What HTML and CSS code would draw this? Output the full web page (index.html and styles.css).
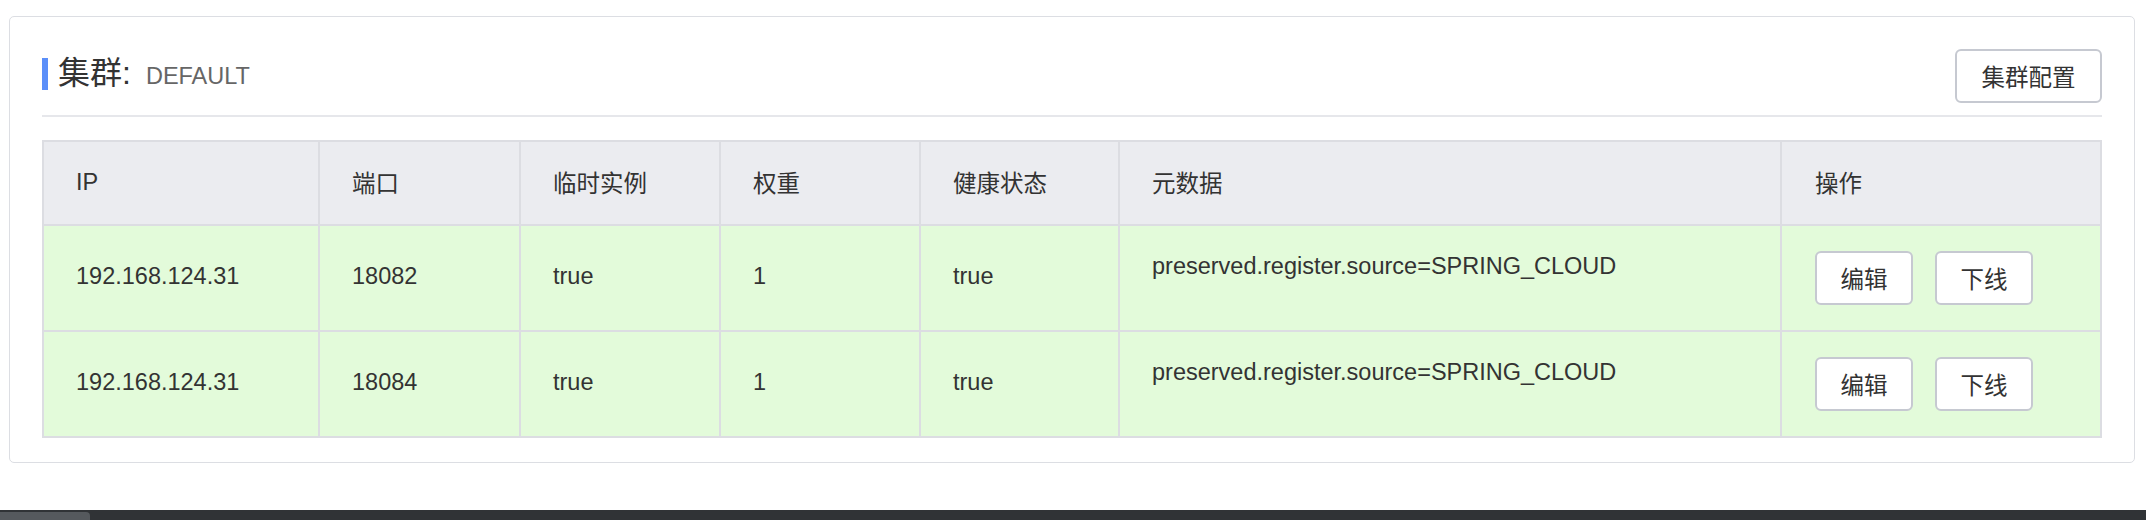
FILE: index.html
```html
<!DOCTYPE html>
<html lang="zh-CN">
<head>
<meta charset="utf-8">
<title>集群</title>
<link rel="stylesheet" href="styles.css">
</head>
<body>
<div class="page">
  <section class="card">
    <div class="card-head">
      <h2 class="title">
        <span class="title-mark"></span>
        <span class="title-text">集群:<span class="title-name">DEFAULT</span></span>
      </h2>
      <button class="btn btn-lg" type="button">集群配置</button>
    </div>
    <table class="grid">
      <colgroup>
        <col class="c-ip"><col class="c-port"><col class="c-eph"><col class="c-weight"><col class="c-health"><col class="c-meta"><col class="c-ops">
      </colgroup>
      <thead>
        <tr class="head-row">
          <th>IP</th><th>端口</th><th>临时实例</th><th>权重</th><th>健康状态</th><th>元数据</th><th class="ops">操作</th>
        </tr>
      </thead>
      <tbody>
        <tr class="body-row">
          <td>192.168.124.31</td><td>18082</td><td>true</td><td>1</td><td>true</td>
          <td class="meta">preserved.register.source=SPRING_CLOUD</td>
          <td class="ops"><div class="ops-group"><button class="btn btn-sm" type="button">编辑</button><button class="btn btn-sm" type="button">下线</button></div></td>
        </tr>
        <tr class="body-row">
          <td>192.168.124.31</td><td>18084</td><td>true</td><td>1</td><td>true</td>
          <td class="meta">preserved.register.source=SPRING_CLOUD</td>
          <td class="ops"><div class="ops-group"><button class="btn btn-sm" type="button">编辑</button><button class="btn btn-sm" type="button">下线</button></div></td>
        </tr>
      </tbody>
    </table>
  </section>
</div>
<div class="statusbar"><span class="statusbar-tab"></span></div>
</body>
</html>
```
FILE: styles.css
```css
html, body {
  margin: 0;
  padding: 0;
  background: #ffffff;
}
body {
  font-family: "Liberation Sans", "Noto Sans CJK SC", sans-serif;
  font-size: 23.5px;
  color: #333333;
  width: 2146px;
  height: 520px;
  overflow: hidden;
}
.page {
  padding: 16px 11px 0 9px;
}
.card {
  border: 1px solid #dcdee3;
  border-radius: 5px;
  background: #ffffff;
  padding: 32px 32px 24px 32px;
}
.card-head {
  display: flex;
  justify-content: space-between;
  align-items: center;
  padding-bottom: 12px;
  border-bottom: 2px solid #e6e7eb;
}
.title {
  display: flex;
  align-items: center;
  margin: 0 0 4px 0;
  font-weight: normal;
}
.title-mark {
  width: 6px;
  height: 32px;
  background: #5b8ff9;
  margin-right: 10px;
}
.title-text {
  font-size: 32px;
  line-height: 36px;
  color: #333333;
}
.title-name {
  font-size: 23.5px;
  color: #666666;
  margin-left: 15px;
}
.btn {
  height: 54px;
  padding: 0;
  border: 2px solid #c6c9d1;
  border-radius: 6px;
  background: #ffffff;
  color: #333333;
  font-family: "Liberation Sans", "Noto Sans CJK SC", sans-serif;
  font-size: 23.5px;
  text-align: center;
  cursor: pointer;
}
.btn-lg {
  width: 147px;
}
.btn-sm {
  width: 98px;
}
.grid {
  width: 100%;
  table-layout: fixed;
  border-collapse: separate;
  border-spacing: 2px;
  background: #dcdde2;
  margin-top: 23px;
}
.c-ip { width: 274px; }
.c-port { width: 199px; }
.c-eph { width: 198px; }
.c-weight { width: 198px; }
.c-health { width: 197px; }
.c-meta { width: 660px; }
.c-ops { width: 318px; }
.head-row {
  height: 82px;
}
.head-row th {
  background: #ebecf0;
  font-weight: normal;
  text-align: left;
  padding: 0 0 2px 32px;
  vertical-align: middle;
}
.body-row {
  height: 104px;
}
.body-row td {
  background: #e3fbda;
  padding: 0 0 4px 32px;
  vertical-align: middle;
  white-space: nowrap;
}
.body-row td.meta {
  vertical-align: top;
  padding-top: 27px;
}
.grid .ops {
  padding-left: 33px;
}
.body-row td.ops {
  padding-bottom: 0;
}
.ops-group {
  display: flex;
  gap: 22px;
}
.statusbar {
  height: 10px;
  margin-top: 47px;
  background: #303336;
  display: flex;
  align-items: flex-end;
}
.statusbar-tab {
  width: 90px;
  height: 8px;
  background: #55595d;
  border-top-right-radius: 4px;
}
```
